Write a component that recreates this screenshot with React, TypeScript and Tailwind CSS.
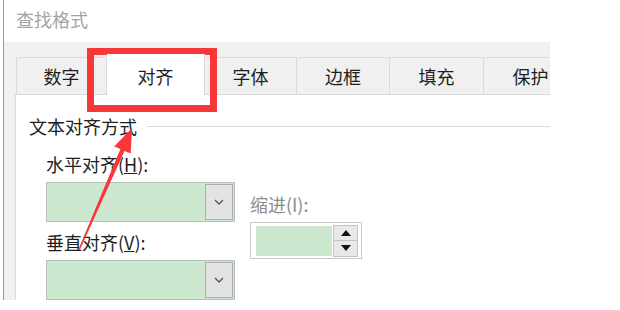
import React from "react";

const tabs = [
  { label: "数字", w: "w-[91px] border-l" },
  { label: "对齐", w: "w-[98px]", active: true },
  { label: "字体", w: "w-[92px]" },
  { label: "边框", w: "w-[93px]" },
  { label: "填充", w: "w-[94px]" },
  { label: "保护", w: "w-[94px]" },
];

const ComboBox: React.FC = () => (
  <div className="w-[189px] h-[40px] bg-[#cce8cf] border border-[#b3c2b6] flex justify-end p-px">
    <div className="w-[28px] h-full bg-[#e3e3e3] border border-[#adadad] flex items-center justify-center">
      <svg width="10" height="6" viewBox="0 0 10 6">
        <path d="M1 1 L5 5 L9 1" fill="none" stroke="#555" strokeWidth="1.3" />
      </svg>
    </div>
  </div>
);

const App: React.FC = () => {
  return (
    <div
      className="relative w-[620px] h-[310px] bg-white overflow-hidden text-[18px] leading-[20px]"
      style={{ fontFamily: '"Microsoft YaHei", "Noto Sans CJK SC", sans-serif' }}
    >
      <div className="ml-[3px] w-[547px] h-[300px] border-l border-[#9a9a9a] flex flex-col overflow-hidden">
        {/* 标题 */}
        <div className="h-[42px] pl-[12px] pt-[9px] text-[#a3a3a3]">查找格式</div>

        <div className="flex-1 bg-[#f0f0f0] pl-[11px] pt-[15px] flex flex-col">
          {/* 选项卡 */}
          <div className="flex items-end h-[37px] ml-px">
            {tabs.map((t) =>
              t.active ? (
                <div
                  key={t.label}
                  className={`${t.w} relative z-10 h-[41px] -mb-px bg-white border-r border-[#dadada] flex items-center justify-center pt-[2px] text-[#1e1e1e] shrink-0`}
                >
                  {t.label}
                </div>
              ) : (
                <div
                  key={t.label}
                  className={`${t.w} h-[37px] border-t border-r border-[#dadada] flex items-center justify-center text-[#1e1e1e] shrink-0`}
                >
                  {t.label}
                </div>
              )
            )}
          </div>

          {/* 内容 */}
          <div className="flex-1 bg-white border-t border-l border-[#dadada] pl-[13px]">
            <div className="mt-[21px] flex items-center h-[20px]">
              <span className="text-[#1e1e1e]">文本对齐方式</span>
              <div className="flex-1 ml-[10px] border-t border-[#dadada]" />
            </div>

            <div className="flex pl-[17px] mt-[18px]">
              <div className="flex flex-col">
                <div className="text-[#1e1e1e]">
                  水平对齐(<span className="underline">H</span>):
                </div>
                <div className="mt-[8px]">
                  <ComboBox />
                </div>
                <div className="mt-[10px] text-[#1e1e1e]">
                  垂直对齐(<span className="underline">V</span>):
                </div>
                <div className="mt-[8px]">
                  <ComboBox />
                </div>
              </div>

              <div className="ml-[15px] mt-[40px] flex flex-col">
                <div className="text-[#8c8c8c]">缩进(I):</div>
                <div className="mt-[8px] w-[112px] h-[37px] bg-white border border-[#c9c9c9] flex items-center pl-[5px] pr-[3px] gap-px">
                  <div className="w-[77px] h-[30px] bg-[#cce8cf]" />
                  <div className="flex flex-col w-[25px] h-[32px]">
                    <div className="flex-1 bg-[#e8e8e8] border border-[#c4c4c4] flex items-center justify-center">
                      <svg width="10" height="6" viewBox="0 0 10 6">
                        <path d="M0 6 L5 0 L10 6 Z" fill="#111" />
                      </svg>
                    </div>
                    <div className="flex-1 bg-[#e8e8e8] border border-t-0 border-[#c4c4c4] flex items-center justify-center">
                      <svg width="10" height="6" viewBox="0 0 10 6">
                        <path d="M0 0 L10 0 L5 6 Z" fill="#111" />
                      </svg>
                    </div>
                  </div>
                </div>
              </div>
            </div>
          </div>
        </div>
      </div>

      {/* 标注：红框 */}
      <div className="absolute left-[87px] top-[48px] w-[130px] h-[64px] border-[7px] border-[#f93638]" />

      {/* 标注：红色箭头 */}
      <svg className="absolute left-0 top-0" width="620" height="310" viewBox="0 0 620 310">
        <polygon
          points="79.7,250.3 78.3,249.7 120.4,149.1 114.2,146.4 132,128 130.7,153.6 124.5,150.9"
          fill="#f93638"
        />
      </svg>
    </div>
  );
};

export default App;
